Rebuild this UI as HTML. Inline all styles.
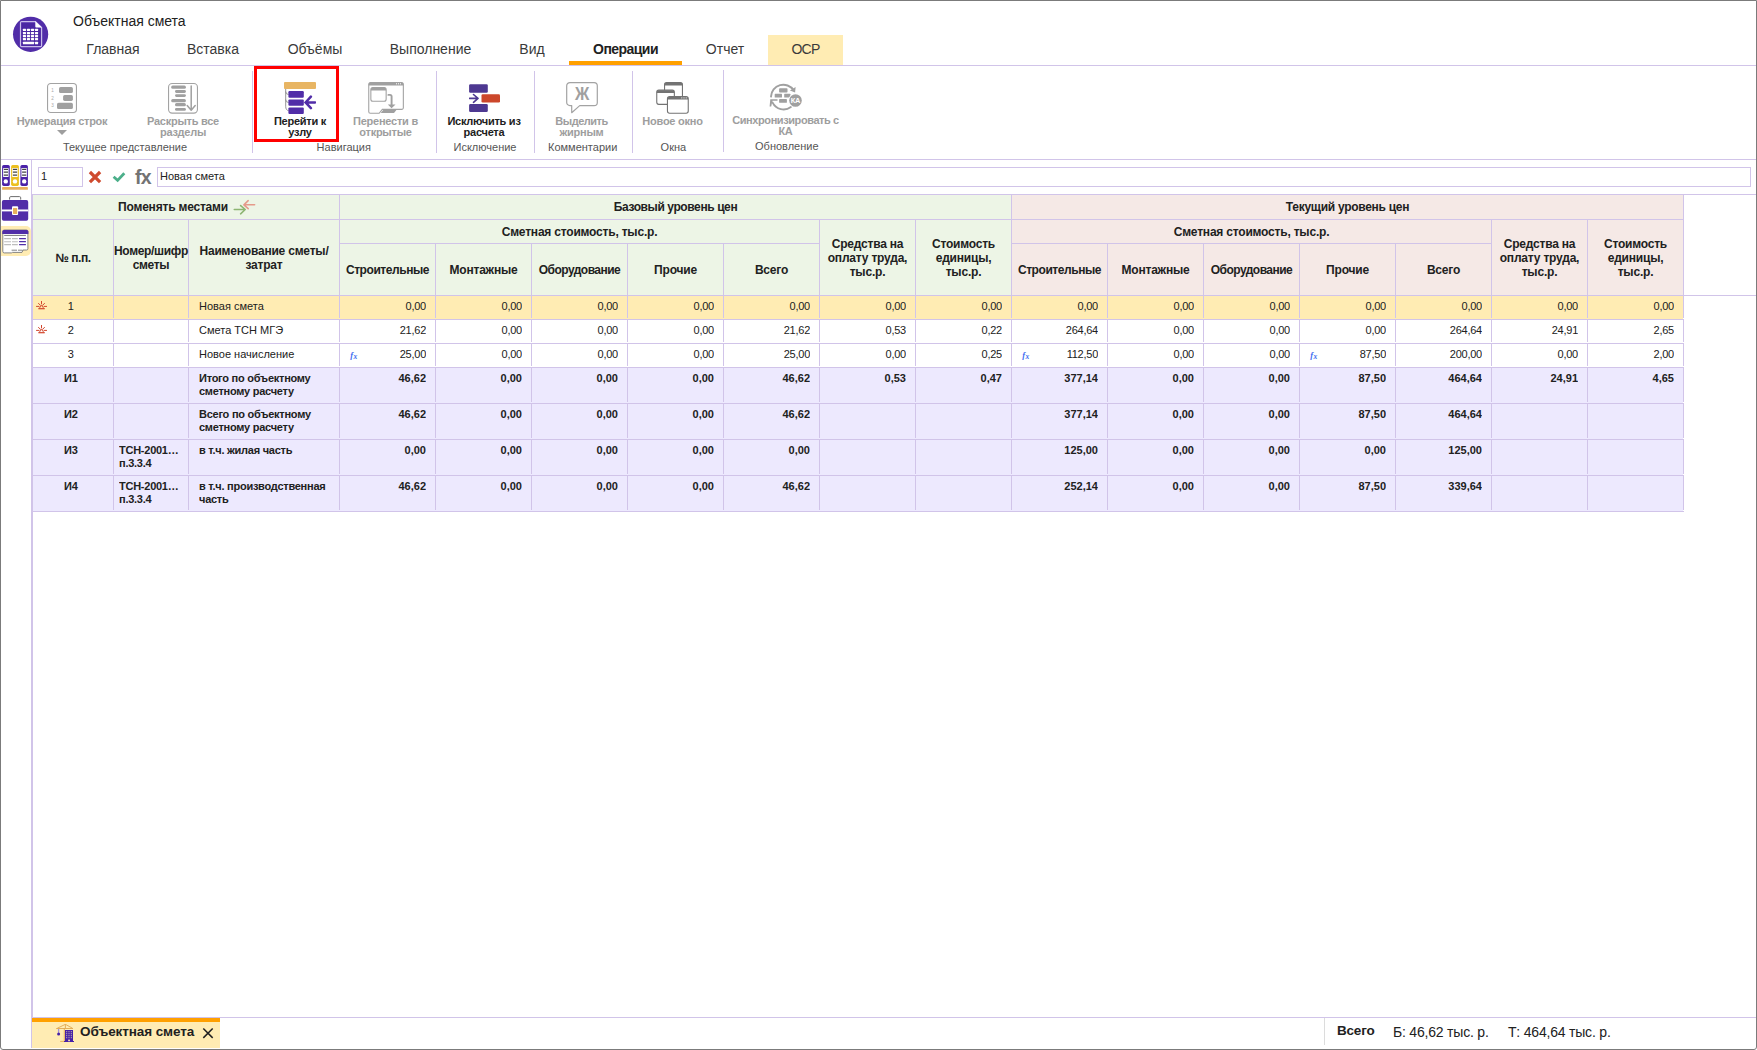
<!DOCTYPE html>
<html lang="ru"><head><meta charset="utf-8"><title>Объектная смета</title>
<style>
*{box-sizing:border-box;margin:0;padding:0}
html,body{width:1757px;height:1050px;overflow:hidden;background:#fff}
body{position:relative;font-family:"Liberation Sans",sans-serif;color:#212121;font-size:11px}
.a{position:absolute}
.t{position:absolute;white-space:nowrap;line-height:1}
.hl{position:absolute;height:1px;background:#d1c4e9}
.vl{position:absolute;width:1px;background:#d1c4e9}
.tab{position:absolute;top:35px;height:30px;font-size:14px;line-height:29px;text-align:center;color:#3a3a3a;white-space:nowrap}
.btn{position:absolute;text-align:center;font-weight:bold;font-size:11px;line-height:11px;color:#9e9e9e;white-space:nowrap;letter-spacing:-0.25px}
.btn.on{color:#212121}
.grp{position:absolute;text-align:center;font-size:11px;line-height:11px;color:#555;white-space:nowrap}
.c{position:absolute;overflow:hidden;white-space:nowrap;font-size:11px;line-height:13px}
.h{position:absolute;font-weight:bold;font-size:12px;line-height:14px;text-align:center;white-space:nowrap;letter-spacing:-0.2px;display:flex;align-items:center;justify-content:center}
.num{text-align:right}
.b{font-weight:bold;letter-spacing:-0.25px}
</style></head>
<body>
<div class="a" style="left:0;top:0;width:1757px;height:1050px;border:1px solid #7b7b7b;border-radius:0 0 3px 3px;z-index:50;pointer-events:none"></div>
<svg class="a" style="left:12px;top:16px" width="38" height="38" viewBox="0 0 38 38">
<circle cx="18.6" cy="18.3" r="17.6" fill="#512da8"/>
<path d="M9.6 7.2h13.2v4.8h4.9v17.8h-18.1z" fill="#4a27a3"/>
<path d="M9.6 5.6h13.8l6.2 5.9v18.1a1.1 1.1 0 0 1-1.1 1.1h-18.9a1.1 1.1 0 0 1-1.1-1.1v-22.9a1.1 1.1 0 0 1 1.1-1.1z" fill="none" stroke="#c9bdea" stroke-width="1.2"/>
<path d="M23.3 5.2l6.6 6.3h-5.6a1 1 0 0 1-1-1z" fill="#fff"/>
<g fill="#fff"><rect x="10.90" y="12.80" width="3.1" height="2.3" rx="0.5"/><rect x="14.93" y="12.80" width="3.1" height="2.3" rx="0.5"/><rect x="18.96" y="12.80" width="3.1" height="2.3" rx="0.5"/><rect x="22.99" y="12.80" width="3.1" height="2.3" rx="0.5"/><rect x="10.90" y="15.90" width="3.1" height="2.3" rx="0.5"/><rect x="14.93" y="15.90" width="3.1" height="2.3" rx="0.5"/><rect x="18.96" y="15.90" width="3.1" height="2.3" rx="0.5"/><rect x="22.99" y="15.90" width="3.1" height="2.3" rx="0.5"/><rect x="10.90" y="19.00" width="3.1" height="2.3" rx="0.5"/><rect x="14.93" y="19.00" width="3.1" height="2.3" rx="0.5"/><rect x="18.96" y="19.00" width="3.1" height="2.3" rx="0.5"/><rect x="22.99" y="19.00" width="3.1" height="2.3" rx="0.5"/><rect x="10.90" y="22.00" width="3.1" height="2.3" rx="0.5"/><rect x="14.93" y="22.00" width="3.1" height="2.3" rx="0.5"/><rect x="18.96" y="22.00" width="3.1" height="2.3" rx="0.5"/><rect x="22.99" y="22.00" width="3.1" height="2.3" rx="0.5"/><rect x="10.9" y="25.85" width="11.2" height="2.3" rx="0.5"/><rect x="22.99" y="25.85" width="3.1" height="2.3" rx="0.5"/></g></svg>
<div class="t" style="left:73px;top:13px;font-size:14px;line-height:16px">Объектная смета</div>
<div class="tab" style="left:63px;width:100px;">Главная</div>
<div class="tab" style="left:163px;width:100px;">Вставка</div>
<div class="tab" style="left:264px;width:102px;">Объёмы</div>
<div class="tab" style="left:366px;width:129px;">Выполнение</div>
<div class="tab" style="left:496px;width:72px;">Вид</div>
<div class="tab" style="left:569px;width:113px;font-weight:bold;color:#212121;letter-spacing:-0.55px;">Операции</div>
<div class="tab" style="left:682px;width:86px;">Отчет</div>
<div class="tab" style="left:768px;width:75px;background:#ffecb3;letter-spacing:-0.8px;">ОСР</div>
<div class="a" style="left:569px;top:61px;width:113px;height:4px;background:#ffa000"></div>
<div class="hl" style="left:1px;top:65px;width:1755px"></div>
<div class="hl" style="left:1px;top:159px;width:1755px"></div>
<div class="vl" style="left:252px;top:71px;height:82px"></div>
<div class="vl" style="left:436px;top:71px;height:82px"></div>
<div class="vl" style="left:534px;top:71px;height:82px"></div>
<div class="vl" style="left:632px;top:71px;height:82px"></div>
<div class="vl" style="left:723px;top:70px;height:82px"></div>
<div class="btn" style="left:-8px;width:140px;top:116px">Нумерация строк</div>
<div class="btn" style="left:113px;width:140px;top:116px">Раскрыть все<br>разделы</div>
<div class="btn on" style="left:230px;width:140px;top:116px">Перейти к<br>узлу</div>
<div class="btn" style="left:315.5px;width:140px;top:116px">Перенести в<br>открытые</div>
<div class="btn on" style="left:414px;width:140px;top:116px">Исключить из<br>расчета</div>
<div class="btn" style="left:511.5px;width:140px;top:116px"><span style="letter-spacing:-0.5px">Выделить</span><br>жирным</div>
<div class="btn" style="left:602.5px;width:140px;top:116px">Новое окно</div>
<div class="btn" style="left:715.5px;width:140px;top:115px"><span style="letter-spacing:-0.42px">Синхронизировать с</span><br>КА</div>
<div class="grp" style="left:45px;width:160px;top:142px">Текущее представление</div>
<div class="grp" style="left:263.75px;width:160px;top:142px">Навигация</div>
<div class="grp" style="left:405px;width:160px;top:142px">Исключение</div>
<div class="grp" style="left:502.70000000000005px;width:160px;top:142px">Комментарии</div>
<div class="grp" style="left:593.4px;width:160px;top:142px">Окна</div>
<div class="grp" style="left:706.8px;width:160px;top:141px">Обновление</div>
<svg class="a" style="left:56px;top:129px" width="12" height="7"><path d="M1 1h10l-5 5z" fill="#9e9e9e"/></svg>
<div class="a" style="left:254px;top:66px;width:85px;height:76px;border:3px solid #ff0000"></div>
<svg class="a" style="left:47px;top:83px" width="30" height="31" viewBox="0 0 30 31"><rect x="0.55" y="0.55" width="28.9" height="28.9" rx="3.2" fill="#fff" stroke="#a3a3a3" stroke-width="1.1"/><g fill="#a0a0a0"><rect x="12" y="4" width="13.9" height="6" rx="1.6"/><rect x="16.1" y="12" width="9.8" height="5.9" rx="1.6"/><rect x="10" y="19.8" width="15.9" height="6.2" rx="1.6"/></g><g font-family="Liberation Sans, sans-serif" font-size="4.6" fill="#a8a8a8"><text x="4.2" y="8.7">1</text><text x="4.2" y="16.6">2</text><text x="4.2" y="24.4">3</text></g></svg>
<svg class="a" style="left:168px;top:83px" width="30" height="31" viewBox="0 0 30 31"><rect x="0.55" y="0.55" width="28.9" height="29.6" rx="3.6" fill="#fff" stroke="#a3a3a3" stroke-width="1.1"/><g fill="#a0a0a0"><rect x="3.2" y="2.6" width="14.7" height="3.1" rx="1.5"/><rect x="7" y="7" width="10.9" height="2.9" rx="1.4"/><rect x="7" y="11.2" width="10.9" height="2.8" rx="1.4"/><rect x="3.2" y="16" width="14.7" height="3.2" rx="1.5"/><rect x="7" y="20.1" width="10.9" height="3.1" rx="1.5"/><rect x="7" y="24.9" width="10.9" height="2.9" rx="1.4"/></g><path d="M23.2 2.9V27M19.2 22.5l4 4.7l4-4.7" fill="none" stroke="#a0a0a0" stroke-width="1.5" stroke-linecap="round" stroke-linejoin="round"/></svg>
<svg class="a" style="left:284px;top:82px" width="32" height="33" viewBox="0 0 32 33"><rect x="0" y="0" width="32" height="7" rx="0.9" fill="#e8b563"/><path d="M1.7 7v17.2q0 4.3 2.9 4.3M1.7 9.5q0 3 2.9 3M1.7 17.5q0 3 2.9 3" fill="none" stroke="#8a8a8a" stroke-width="0.9"/><g fill="#512da8"><rect x="4.4" y="9.1" width="15.4" height="6.7" rx="1.1"/><rect x="4.4" y="17.5" width="15.4" height="6.3" rx="1.1"/><rect x="4.4" y="25.5" width="15.4" height="6.5" rx="1.1"/></g><path d="M31 20.4H23M26.9 14.6L21.6 20.4L26.9 26.2" fill="none" stroke="#512da8" stroke-width="2.5" stroke-linecap="round" stroke-linejoin="miter"/></svg>
<svg class="a" style="left:368px;top:82px" width="36" height="32" viewBox="0 0 36 32"><path d="M0.75 2.2a1.6 1.6 0 0 1 1.6-1.6h31.4a1.6 1.6 0 0 1 1.6 1.6v23.6a1.6 1.6 0 0 1-1.6 1.6h-19.4l-3.2 3.9h-8.8a1.6 1.6 0 0 1-1.6-1.6z" fill="#fff" stroke="#a3a3a3" stroke-width="1.1"/><path d="M0.75 3.6v-1.4a1.6 1.6 0 0 1 1.6-1.6h31.4a1.6 1.6 0 0 1 1.6 1.6v1.4z" fill="#a0a0a0"/><g fill="#fff"><rect x="28" y="1.3" width="1" height="1"/><rect x="30" y="1.3" width="1" height="1"/><rect x="32" y="1.3" width="1" height="1"/></g><path d="M15.6 27.6h13.2l-2.8 3.5h-13.3z" fill="#a0a0a0"/><rect x="2.85" y="5.65" width="15.3" height="13.6" rx="2" fill="#fff" stroke="#a3a3a3" stroke-width="1.1"/><path d="M2.85 8.6v-1a2 2 0 0 1 2-2h11.3a2 2 0 0 1 2 2v1z" fill="#a0a0a0"/><path d="M20.4 12.9h1.6a1.6 1.6 0 0 1 1.6 1.6v8.3" fill="none" stroke="#a0a0a0" stroke-width="1.9" stroke-linecap="round"/><path d="M19.8 22.4h7.7l-3.9 3.8z" fill="#a0a0a0"/></svg>
<svg class="a" style="left:469px;top:84px" width="32" height="29" viewBox="0 0 32 29"><g fill="#4d3891"><rect x="0.1" y="0.3" width="18.7" height="8.4" rx="1.3"/><rect x="0.1" y="20.1" width="18.7" height="8" rx="1.3"/></g><rect x="12.5" y="10.2" width="18.5" height="8.4" rx="1.3" fill="#cc472b"/><path d="M0.6 14.4H8.4M4.5 10.5L9 14.4L4.5 18.3" fill="none" stroke="#4d3891" stroke-width="1.6" stroke-linecap="round" stroke-linejoin="round"/></svg>
<svg class="a" style="left:566px;top:82px" width="33" height="32" viewBox="0 0 33 32"><path d="M0.7 3.8a3.2 3.2 0 0 1 3.2-3.2h24.2a3.2 3.2 0 0 1 3.2 3.2v16.6a3.2 3.2 0 0 1-3.2 3.2h-14.4l-8 7.1v-7.1h-1.8a3.2 3.2 0 0 1-3.2-3.2z" fill="#fff" stroke="#a3a3a3" stroke-width="1.2" stroke-linejoin="round"/><text transform="translate(16.1 18.1) scale(0.86 1)" text-anchor="middle" font-family="Liberation Sans, sans-serif" font-weight="bold" font-size="18.4" fill="#a0a0a0">Ж</text></svg>
<svg class="a" style="left:656px;top:82px" width="34" height="33" viewBox="0 0 34 33"><g fill="#fff" stroke="#737373" stroke-width="1.1"><rect x="8.55" y="0.55" width="17.9" height="17" rx="2"/></g><path d="M8.55 3.4v-0.85a2 2 0 0 1 2-2h13.9a2 2 0 0 1 2 2v0.85z" fill="#737373"/><rect x="0.75" y="8.15" width="17.6" height="14.2" rx="2" fill="#fff" stroke="#737373" stroke-width="1.1"/><path d="M0.75 11v-0.85a2 2 0 0 1 2-2h13.6a2 2 0 0 1 2 2v0.85z" fill="#737373"/><rect x="11.45" y="14.65" width="20.8" height="16.6" rx="2.2" fill="#fff" stroke="#737373" stroke-width="1.1"/><path d="M11.45 17.4v-0.55a2.2 2.2 0 0 1 2.2-2.2h16.4a2.2 2.2 0 0 1 2.2 2.2v0.55z" fill="#737373"/><g fill="#fff"><rect x="25.3" y="15.4" width="1" height="1"/><rect x="27.5" y="15.4" width="1" height="1"/><rect x="29.7" y="15.4" width="1" height="1"/></g></svg>
<svg class="a" style="left:769px;top:82px" width="34" height="32" viewBox="0 0 34 32"><g fill="none" stroke="#a0a0a0" stroke-width="1.9" stroke-linecap="round"><path d="M2 14.6A12.3 12.3 0 0 1 24.6 8.3"/><path d="M21.9 25A12.3 12.3 0 0 1 3.6 20.6"/></g><g fill="#a0a0a0"><path d="M26.6 5l-0.5 5.6l-5.2-2.2z"/><path d="M1.3 17.2h7.2v1.6h-5l-1.3 5.8h-1.6z"/><rect x="10.1" y="6.3" width="8.4" height="4.2" rx="0.8"/><rect x="5.7" y="11.8" width="7.3" height="3.8" rx="0.6"/><rect x="15.2" y="11.8" width="6.3" height="3.8" rx="0.6"/><rect x="10.1" y="17.1" width="7.8" height="3.7" rx="0.6"/></g><circle cx="26.5" cy="18.5" r="7.2" fill="#fff"/><circle cx="26.5" cy="18.5" r="6.3" fill="#a0a0a0"/><text x="26.4" y="21.2" text-anchor="middle" font-family="Liberation Sans, sans-serif" font-weight="bold" font-size="7.4" fill="#fff" letter-spacing="-0.3">КА</text></svg>
<svg class="a" style="left:232px;top:199px;z-index:5" width="26" height="18" viewBox="0 0 26 18"><path d="M2.3 10.5H12.8M8.6 6.6L13.2 10.5L8.6 14.8" fill="none" stroke="#8db572" stroke-width="1.6" stroke-linecap="round" stroke-linejoin="round"/><path d="M22.6 5.8H12.4M16.2 1.7L11.9 5.8L16.2 9.7" fill="none" stroke="#e59a8a" stroke-width="1.6" stroke-linecap="round" stroke-linejoin="round"/></svg>

<div class="vl" style="left:31px;top:160px;height:888px"></div>
<svg class="a" style="left:2px;top:165px" width="27" height="26" viewBox="0 0 27 26"><g><rect x="0.1" y="0" width="7.7" height="20.9" rx="1.6" fill="#4a22a8"/><rect x="9.1" y="0" width="7.8" height="20.9" rx="1.6" fill="#ecc01e"/><rect x="18.4" y="0" width="7.5" height="20.9" rx="1.6" fill="#4a22a8"/></g><g fill="#fff"><rect x="1.1" y="3" width="5.5" height="9" rx="0.6"/><rect x="10.2" y="3" width="5.5" height="9" rx="0.6"/><rect x="19.4" y="3" width="5.5" height="9" rx="0.6"/><circle cx="3.8" cy="16.4" r="2.2"/><circle cx="13" cy="16.4" r="2.2"/><circle cx="22.2" cy="16.4" r="2.2"/></g><g stroke="#444" stroke-width="1.2"><path d="M1.8 4.3h4.2M1.8 7.2h4.2M1.8 10.1h4.2M10.9 4.3h4.2M10.9 7.2h4.2M10.9 10.1h4.2M20.1 4.3h4.2M20.1 7.2h4.2M20.1 10.1h4.2"/></g><rect x="0.1" y="22.1" width="25.8" height="2.7" rx="0.4" fill="#e8b05c"/></svg>
<svg class="a" style="left:1px;top:195px" width="29" height="27" viewBox="0 0 29 27"><path d="M8.6 4.6v-1.8a1.2 1.2 0 0 1 1.2-1.2h8.7a1.2 1.2 0 0 1 1.2 1.2v1.8" fill="none" stroke="#6d6d6d" stroke-width="1"/><rect x="0.9" y="5.1" width="26.3" height="20.7" rx="1.8" fill="#512da8"/><rect x="0.9" y="14.5" width="26.3" height="1.9" fill="#fff"/><rect x="11" y="11.2" width="6.1" height="8.8" rx="1" fill="#fff"/><rect x="12" y="12.9" width="4.2" height="6.1" rx="0.4" fill="#e8b05c"/></svg>
<div class="a" style="left:1px;top:226px;width:30px;height:30px;background:#ffecb3;border-radius:0 5px 5px 0"></div>
<svg class="a" style="left:1px;top:229px" width="29" height="25" viewBox="0 0 29 25"><path d="M1.8 2.5a1.5 1.5 0 0 1 1.5-1.5h22.1a1.5 1.5 0 0 1 1.5 1.5v17.2a1.3 1.3 0 0 1-1.3 1.3h-3.6l-1 2.4h-9.6l-1 0.5h-7.1a1.5 1.5 0 0 1-1.5-1.5z" fill="#fff" stroke="#777" stroke-width="0.9"/><path d="M1.3 4.9v-2.4a1.6 1.6 0 0 1 1.6-1.6h22.9a1.6 1.6 0 0 1 1.6 1.6v2.4z" fill="#512da8"/><path d="M3.2 6.4h21.7" stroke="#777" stroke-width="1"/><g stroke="#bdbdbd" stroke-width="1.1"><path d="M3.2 9.6h6.8M11 9.6h5.8M3.2 12.7h6.8M11 12.7h5.8M3.2 15.6h6.8M11 15.6h5.8"/></g><g stroke="#512da8" stroke-width="1.2"><path d="M18.1 9.6h6.8M18.1 12.7h6.8M18.1 15.6h6.8"/></g><path d="M10.6 21.2h5.4M17 21.2h4.6" stroke="#777" stroke-width="0.9"/></svg>

<div class="a" style="left:38px;top:167px;width:45px;height:20px;border:1px solid #d1c4e9"></div>
<div class="t" style="left:41px;top:171px;font-size:11px;line-height:11px">1</div>
<div class="a" style="left:157px;top:167px;width:1594px;height:20px;border:1px solid #d1c4e9"></div>
<div class="t" style="left:160px;top:171px;font-size:11px;line-height:11px">Новая смета</div>
<svg class="a" style="left:88px;top:170px" width="14" height="14"><path d="M1.9 2l10.2 10.2M12.1 2l-10.2 10.2" stroke="#cf4a2e" stroke-width="3.2" fill="none"/></svg>
<svg class="a" style="left:112px;top:170px" width="14" height="14"><path d="M1.6 6.8l4 3.6l6.7-7.2" stroke="#4caf8a" stroke-width="2.8" fill="none"/></svg>
<div class="t" style="left:135px;top:167px;font-size:19.5px;line-height:21px;font-weight:bold;color:#737373;letter-spacing:-0.8px">fx</div>
<div class="a" style="left:33px;top:195px;width:978px;height:100px;background:#edf5e6"></div>
<div class="a" style="left:1012px;top:195px;width:671px;height:100px;background:#f5e9e6"></div>
<div class="hl" style="left:32px;top:194px;width:1724px"></div>
<div class="hl" style="left:32px;top:219px;width:1652px"></div>
<div class="hl" style="left:339px;top:243px;width:480px"></div>
<div class="hl" style="left:1011px;top:243px;width:480px"></div>
<div class="hl" style="left:32px;top:295px;width:1724px"></div>
<div class="vl" style="left:32px;top:194px;height:824px"></div>
<div class="vl" style="left:339px;top:194px;height:102px"></div>
<div class="vl" style="left:1011px;top:194px;height:102px"></div>
<div class="vl" style="left:1683px;top:194px;height:102px"></div>
<div class="vl" style="left:113px;top:220px;height:75px"></div>
<div class="vl" style="left:188px;top:220px;height:75px"></div>
<div class="vl" style="left:819px;top:220px;height:75px"></div>
<div class="vl" style="left:915px;top:220px;height:75px"></div>
<div class="vl" style="left:1491px;top:220px;height:75px"></div>
<div class="vl" style="left:1587px;top:220px;height:75px"></div>
<div class="vl" style="left:435px;top:244px;height:51px"></div>
<div class="vl" style="left:531px;top:244px;height:51px"></div>
<div class="vl" style="left:627px;top:244px;height:51px"></div>
<div class="vl" style="left:723px;top:244px;height:51px"></div>
<div class="vl" style="left:1107px;top:244px;height:51px"></div>
<div class="vl" style="left:1203px;top:244px;height:51px"></div>
<div class="vl" style="left:1299px;top:244px;height:51px"></div>
<div class="vl" style="left:1395px;top:244px;height:51px"></div>
<div class="h" style="left:33px;width:306px;top:195px;height:24px;">Поменять местами<span style="display:inline-block;width:26px"></span></div>
<div class="h" style="left:340px;width:671px;top:195px;height:24px;letter-spacing:-0.4px;">Базовый уровень цен</div>
<div class="h" style="left:1012px;width:671px;top:195px;height:24px;letter-spacing:-0.28px;">Текущий уровень цен</div>
<div class="h" style="left:33px;width:80px;top:220px;height:75px;letter-spacing:-0.45px;">№ п.п.</div>
<div class="h" style="left:114px;width:74px;top:220px;height:75px;letter-spacing:-0.33px;"><div>Номер/шифр<br>сметы</div></div>
<div class="h" style="left:189px;width:150px;top:220px;height:75px;"><div>Наименование сметы/<br>затрат</div></div>
<div class="h" style="left:340px;width:479px;top:220px;height:23px;">Сметная стоимость, тыс.р.</div>
<div class="h" style="left:340px;width:95px;top:244px;height:51px;letter-spacing:-0.43px;">Строительные</div>
<div class="h" style="left:436px;width:95px;top:244px;height:51px;">Монтажные</div>
<div class="h" style="left:532px;width:95px;top:244px;height:51px;letter-spacing:-0.52px;">Оборудование</div>
<div class="h" style="left:628px;width:95px;top:244px;height:51px;">Прочие</div>
<div class="h" style="left:724px;width:95px;top:244px;height:51px;">Всего</div>
<div class="h" style="left:820px;width:95px;top:220px;height:75px;"><div>Средства на<br>оплату труда,<br>тыс.р.</div></div>
<div class="h" style="left:916px;width:95px;top:220px;height:75px;"><div>Стоимость<br>единицы,<br>тыс.р.</div></div>
<div class="h" style="left:1012px;width:479px;top:220px;height:23px;">Сметная стоимость, тыс.р.</div>
<div class="h" style="left:1012px;width:95px;top:244px;height:51px;letter-spacing:-0.43px;">Строительные</div>
<div class="h" style="left:1108px;width:95px;top:244px;height:51px;">Монтажные</div>
<div class="h" style="left:1204px;width:95px;top:244px;height:51px;letter-spacing:-0.52px;">Оборудование</div>
<div class="h" style="left:1300px;width:95px;top:244px;height:51px;">Прочие</div>
<div class="h" style="left:1396px;width:95px;top:244px;height:51px;">Всего</div>
<div class="h" style="left:1492px;width:95px;top:220px;height:75px;"><div>Средства на<br>оплату труда,<br>тыс.р.</div></div>
<div class="h" style="left:1588px;width:95px;top:220px;height:75px;"><div>Стоимость<br>единицы,<br>тыс.р.</div></div>
<div class="a" style="left:33px;top:296px;width:1650px;height:23px;background:#ffecb3"></div>
<div class="hl" style="left:32px;top:319px;width:1652px"></div>
<div class="vl" style="left:113px;top:296px;height:22px"></div>
<div class="vl" style="left:188px;top:296px;height:22px"></div>
<div class="vl" style="left:339px;top:296px;height:22px"></div>
<div class="vl" style="left:435px;top:296px;height:22px"></div>
<div class="vl" style="left:531px;top:296px;height:22px"></div>
<div class="vl" style="left:627px;top:296px;height:22px"></div>
<div class="vl" style="left:723px;top:296px;height:22px"></div>
<div class="vl" style="left:819px;top:296px;height:22px"></div>
<div class="vl" style="left:915px;top:296px;height:22px"></div>
<div class="vl" style="left:1011px;top:296px;height:22px"></div>
<div class="vl" style="left:1107px;top:296px;height:22px"></div>
<div class="vl" style="left:1203px;top:296px;height:22px"></div>
<div class="vl" style="left:1299px;top:296px;height:22px"></div>
<div class="vl" style="left:1395px;top:296px;height:22px"></div>
<div class="vl" style="left:1491px;top:296px;height:22px"></div>
<div class="vl" style="left:1587px;top:296px;height:22px"></div>
<div class="vl" style="left:1683px;top:296px;height:22px"></div>
<svg class="a" style="left:36px;top:301px" width="12" height="10" viewBox="0 0 12 10"><g stroke="#d2462c" stroke-width="1" fill="none" stroke-linecap="round"><path d="M5.5 0.4V2.9M2.5 2.5L4.5 4.3M8.5 2.5L6.5 4.3M0.5 5.4H3.1M8 5.4H10.6"/><path d="M3.1 7.5L5.5 4.3L7.9 7.5" stroke-width="0.9" stroke-linecap="butt"/><path d="M2.4 7.7H8.7" stroke-width="1.2" stroke-linecap="butt"/></g></svg>
<div class="c" style="left:33px;width:80px;top:300px;text-align:center;padding-right:4.5px">1</div>
<div class="c" style="left:199px;width:140px;top:300px">Новая смета</div>
<div class="c num" style="left:340px;width:86px;top:300px;letter-spacing:-0.25px">0,00</div>
<div class="c num" style="left:436px;width:86px;top:300px;letter-spacing:-0.25px">0,00</div>
<div class="c num" style="left:532px;width:86px;top:300px;letter-spacing:-0.25px">0,00</div>
<div class="c num" style="left:628px;width:86px;top:300px;letter-spacing:-0.25px">0,00</div>
<div class="c num" style="left:724px;width:86px;top:300px;letter-spacing:-0.25px">0,00</div>
<div class="c num" style="left:820px;width:86px;top:300px;letter-spacing:-0.25px">0,00</div>
<div class="c num" style="left:916px;width:86px;top:300px;letter-spacing:-0.25px">0,00</div>
<div class="c num" style="left:1012px;width:86px;top:300px;letter-spacing:-0.25px">0,00</div>
<div class="c num" style="left:1108px;width:86px;top:300px;letter-spacing:-0.25px">0,00</div>
<div class="c num" style="left:1204px;width:86px;top:300px;letter-spacing:-0.25px">0,00</div>
<div class="c num" style="left:1300px;width:86px;top:300px;letter-spacing:-0.25px">0,00</div>
<div class="c num" style="left:1396px;width:86px;top:300px;letter-spacing:-0.25px">0,00</div>
<div class="c num" style="left:1492px;width:86px;top:300px;letter-spacing:-0.25px">0,00</div>
<div class="c num" style="left:1588px;width:86px;top:300px;letter-spacing:-0.25px">0,00</div>
<div class="a" style="left:33px;top:320px;width:1650px;height:23px;background:#fff"></div>
<div class="hl" style="left:32px;top:343px;width:1652px"></div>
<div class="vl" style="left:113px;top:320px;height:22px"></div>
<div class="vl" style="left:188px;top:320px;height:22px"></div>
<div class="vl" style="left:339px;top:320px;height:22px"></div>
<div class="vl" style="left:435px;top:320px;height:22px"></div>
<div class="vl" style="left:531px;top:320px;height:22px"></div>
<div class="vl" style="left:627px;top:320px;height:22px"></div>
<div class="vl" style="left:723px;top:320px;height:22px"></div>
<div class="vl" style="left:819px;top:320px;height:22px"></div>
<div class="vl" style="left:915px;top:320px;height:22px"></div>
<div class="vl" style="left:1011px;top:320px;height:22px"></div>
<div class="vl" style="left:1107px;top:320px;height:22px"></div>
<div class="vl" style="left:1203px;top:320px;height:22px"></div>
<div class="vl" style="left:1299px;top:320px;height:22px"></div>
<div class="vl" style="left:1395px;top:320px;height:22px"></div>
<div class="vl" style="left:1491px;top:320px;height:22px"></div>
<div class="vl" style="left:1587px;top:320px;height:22px"></div>
<div class="vl" style="left:1683px;top:320px;height:22px"></div>
<svg class="a" style="left:36px;top:325px" width="12" height="10" viewBox="0 0 12 10"><g stroke="#d2462c" stroke-width="1" fill="none" stroke-linecap="round"><path d="M5.5 0.4V2.9M2.5 2.5L4.5 4.3M8.5 2.5L6.5 4.3M0.5 5.4H3.1M8 5.4H10.6"/><path d="M3.1 7.5L5.5 4.3L7.9 7.5" stroke-width="0.9" stroke-linecap="butt"/><path d="M2.4 7.7H8.7" stroke-width="1.2" stroke-linecap="butt"/></g></svg>
<div class="c" style="left:33px;width:80px;top:324px;text-align:center;padding-right:4.5px">2</div>
<div class="c" style="left:199px;width:140px;top:324px">Смета ТСН МГЭ</div>
<div class="c num" style="left:340px;width:86px;top:324px;letter-spacing:-0.25px">21,62</div>
<div class="c num" style="left:436px;width:86px;top:324px;letter-spacing:-0.25px">0,00</div>
<div class="c num" style="left:532px;width:86px;top:324px;letter-spacing:-0.25px">0,00</div>
<div class="c num" style="left:628px;width:86px;top:324px;letter-spacing:-0.25px">0,00</div>
<div class="c num" style="left:724px;width:86px;top:324px;letter-spacing:-0.25px">21,62</div>
<div class="c num" style="left:820px;width:86px;top:324px;letter-spacing:-0.25px">0,53</div>
<div class="c num" style="left:916px;width:86px;top:324px;letter-spacing:-0.25px">0,22</div>
<div class="c num" style="left:1012px;width:86px;top:324px;letter-spacing:-0.25px">264,64</div>
<div class="c num" style="left:1108px;width:86px;top:324px;letter-spacing:-0.25px">0,00</div>
<div class="c num" style="left:1204px;width:86px;top:324px;letter-spacing:-0.25px">0,00</div>
<div class="c num" style="left:1300px;width:86px;top:324px;letter-spacing:-0.25px">0,00</div>
<div class="c num" style="left:1396px;width:86px;top:324px;letter-spacing:-0.25px">264,64</div>
<div class="c num" style="left:1492px;width:86px;top:324px;letter-spacing:-0.25px">24,91</div>
<div class="c num" style="left:1588px;width:86px;top:324px;letter-spacing:-0.25px">2,65</div>
<div class="a" style="left:33px;top:344px;width:1650px;height:23px;background:#fff"></div>
<div class="hl" style="left:32px;top:367px;width:1652px"></div>
<div class="vl" style="left:113px;top:344px;height:22px"></div>
<div class="vl" style="left:188px;top:344px;height:22px"></div>
<div class="vl" style="left:339px;top:344px;height:22px"></div>
<div class="vl" style="left:435px;top:344px;height:22px"></div>
<div class="vl" style="left:531px;top:344px;height:22px"></div>
<div class="vl" style="left:627px;top:344px;height:22px"></div>
<div class="vl" style="left:723px;top:344px;height:22px"></div>
<div class="vl" style="left:819px;top:344px;height:22px"></div>
<div class="vl" style="left:915px;top:344px;height:22px"></div>
<div class="vl" style="left:1011px;top:344px;height:22px"></div>
<div class="vl" style="left:1107px;top:344px;height:22px"></div>
<div class="vl" style="left:1203px;top:344px;height:22px"></div>
<div class="vl" style="left:1299px;top:344px;height:22px"></div>
<div class="vl" style="left:1395px;top:344px;height:22px"></div>
<div class="vl" style="left:1491px;top:344px;height:22px"></div>
<div class="vl" style="left:1587px;top:344px;height:22px"></div>
<div class="vl" style="left:1683px;top:344px;height:22px"></div>
<div class="c" style="left:33px;width:80px;top:348px;text-align:center;padding-right:4.5px">3</div>
<div class="c" style="left:199px;width:140px;top:348px">Новое начисление</div>
<div class="c num" style="left:340px;width:86px;top:348px;letter-spacing:-0.25px">25,00</div>
<div class="t" style="left:350.3px;top:349.5px;font-size:8.5px;line-height:10px;font-style:italic;font-weight:bold;color:#3d6bf0;font-family:'Liberation Serif',serif;letter-spacing:0.2px"><span>f</span><span style="font-size:7.5px;position:relative;top:1px;left:0.2px">x</span></div>
<div class="c num" style="left:436px;width:86px;top:348px;letter-spacing:-0.25px">0,00</div>
<div class="c num" style="left:532px;width:86px;top:348px;letter-spacing:-0.25px">0,00</div>
<div class="c num" style="left:628px;width:86px;top:348px;letter-spacing:-0.25px">0,00</div>
<div class="c num" style="left:724px;width:86px;top:348px;letter-spacing:-0.25px">25,00</div>
<div class="c num" style="left:820px;width:86px;top:348px;letter-spacing:-0.25px">0,00</div>
<div class="c num" style="left:916px;width:86px;top:348px;letter-spacing:-0.25px">0,25</div>
<div class="c num" style="left:1012px;width:86px;top:348px;letter-spacing:-0.25px">112,50</div>
<div class="t" style="left:1022.3px;top:349.5px;font-size:8.5px;line-height:10px;font-style:italic;font-weight:bold;color:#3d6bf0;font-family:'Liberation Serif',serif;letter-spacing:0.2px"><span>f</span><span style="font-size:7.5px;position:relative;top:1px;left:0.2px">x</span></div>
<div class="c num" style="left:1108px;width:86px;top:348px;letter-spacing:-0.25px">0,00</div>
<div class="c num" style="left:1204px;width:86px;top:348px;letter-spacing:-0.25px">0,00</div>
<div class="c num" style="left:1300px;width:86px;top:348px;letter-spacing:-0.25px">87,50</div>
<div class="t" style="left:1310.3px;top:349.5px;font-size:8.5px;line-height:10px;font-style:italic;font-weight:bold;color:#3d6bf0;font-family:'Liberation Serif',serif;letter-spacing:0.2px"><span>f</span><span style="font-size:7.5px;position:relative;top:1px;left:0.2px">x</span></div>
<div class="c num" style="left:1396px;width:86px;top:348px;letter-spacing:-0.25px">200,00</div>
<div class="c num" style="left:1492px;width:86px;top:348px;letter-spacing:-0.25px">0,00</div>
<div class="c num" style="left:1588px;width:86px;top:348px;letter-spacing:-0.25px">2,00</div>
<div class="a" style="left:33px;top:368px;width:1650px;height:35px;background:#ede9fe"></div>
<div class="hl" style="left:32px;top:403px;width:1652px"></div>
<div class="vl" style="left:113px;top:368px;height:34px"></div>
<div class="vl" style="left:188px;top:368px;height:34px"></div>
<div class="vl" style="left:339px;top:368px;height:34px"></div>
<div class="vl" style="left:435px;top:368px;height:34px"></div>
<div class="vl" style="left:531px;top:368px;height:34px"></div>
<div class="vl" style="left:627px;top:368px;height:34px"></div>
<div class="vl" style="left:723px;top:368px;height:34px"></div>
<div class="vl" style="left:819px;top:368px;height:34px"></div>
<div class="vl" style="left:915px;top:368px;height:34px"></div>
<div class="vl" style="left:1011px;top:368px;height:34px"></div>
<div class="vl" style="left:1107px;top:368px;height:34px"></div>
<div class="vl" style="left:1203px;top:368px;height:34px"></div>
<div class="vl" style="left:1299px;top:368px;height:34px"></div>
<div class="vl" style="left:1395px;top:368px;height:34px"></div>
<div class="vl" style="left:1491px;top:368px;height:34px"></div>
<div class="vl" style="left:1587px;top:368px;height:34px"></div>
<div class="vl" style="left:1683px;top:368px;height:34px"></div>
<div class="c b" style="left:33px;width:80px;top:372px;text-align:center;padding-right:4.5px">И1</div>
<div class="c b" style="left:199px;width:140px;top:372px">Итого по объектному<br>сметному расчету</div>
<div class="c num b" style="left:340px;width:86px;top:372px;letter-spacing:0">46,62</div>
<div class="c num b" style="left:436px;width:86px;top:372px;letter-spacing:0">0,00</div>
<div class="c num b" style="left:532px;width:86px;top:372px;letter-spacing:0">0,00</div>
<div class="c num b" style="left:628px;width:86px;top:372px;letter-spacing:0">0,00</div>
<div class="c num b" style="left:724px;width:86px;top:372px;letter-spacing:0">46,62</div>
<div class="c num b" style="left:820px;width:86px;top:372px;letter-spacing:0">0,53</div>
<div class="c num b" style="left:916px;width:86px;top:372px;letter-spacing:0">0,47</div>
<div class="c num b" style="left:1012px;width:86px;top:372px;letter-spacing:0">377,14</div>
<div class="c num b" style="left:1108px;width:86px;top:372px;letter-spacing:0">0,00</div>
<div class="c num b" style="left:1204px;width:86px;top:372px;letter-spacing:0">0,00</div>
<div class="c num b" style="left:1300px;width:86px;top:372px;letter-spacing:0">87,50</div>
<div class="c num b" style="left:1396px;width:86px;top:372px;letter-spacing:0">464,64</div>
<div class="c num b" style="left:1492px;width:86px;top:372px;letter-spacing:0">24,91</div>
<div class="c num b" style="left:1588px;width:86px;top:372px;letter-spacing:0">4,65</div>
<div class="a" style="left:33px;top:404px;width:1650px;height:35px;background:#ede9fe"></div>
<div class="hl" style="left:32px;top:439px;width:1652px"></div>
<div class="vl" style="left:113px;top:404px;height:34px"></div>
<div class="vl" style="left:188px;top:404px;height:34px"></div>
<div class="vl" style="left:339px;top:404px;height:34px"></div>
<div class="vl" style="left:435px;top:404px;height:34px"></div>
<div class="vl" style="left:531px;top:404px;height:34px"></div>
<div class="vl" style="left:627px;top:404px;height:34px"></div>
<div class="vl" style="left:723px;top:404px;height:34px"></div>
<div class="vl" style="left:819px;top:404px;height:34px"></div>
<div class="vl" style="left:915px;top:404px;height:34px"></div>
<div class="vl" style="left:1011px;top:404px;height:34px"></div>
<div class="vl" style="left:1107px;top:404px;height:34px"></div>
<div class="vl" style="left:1203px;top:404px;height:34px"></div>
<div class="vl" style="left:1299px;top:404px;height:34px"></div>
<div class="vl" style="left:1395px;top:404px;height:34px"></div>
<div class="vl" style="left:1491px;top:404px;height:34px"></div>
<div class="vl" style="left:1587px;top:404px;height:34px"></div>
<div class="vl" style="left:1683px;top:404px;height:34px"></div>
<div class="c b" style="left:33px;width:80px;top:408px;text-align:center;padding-right:4.5px">И2</div>
<div class="c b" style="left:199px;width:140px;top:408px">Всего по объектному<br>сметному расчету</div>
<div class="c num b" style="left:340px;width:86px;top:408px;letter-spacing:0">46,62</div>
<div class="c num b" style="left:436px;width:86px;top:408px;letter-spacing:0">0,00</div>
<div class="c num b" style="left:532px;width:86px;top:408px;letter-spacing:0">0,00</div>
<div class="c num b" style="left:628px;width:86px;top:408px;letter-spacing:0">0,00</div>
<div class="c num b" style="left:724px;width:86px;top:408px;letter-spacing:0">46,62</div>
<div class="c num b" style="left:1012px;width:86px;top:408px;letter-spacing:0">377,14</div>
<div class="c num b" style="left:1108px;width:86px;top:408px;letter-spacing:0">0,00</div>
<div class="c num b" style="left:1204px;width:86px;top:408px;letter-spacing:0">0,00</div>
<div class="c num b" style="left:1300px;width:86px;top:408px;letter-spacing:0">87,50</div>
<div class="c num b" style="left:1396px;width:86px;top:408px;letter-spacing:0">464,64</div>
<div class="a" style="left:33px;top:440px;width:1650px;height:35px;background:#ede9fe"></div>
<div class="hl" style="left:32px;top:475px;width:1652px"></div>
<div class="vl" style="left:113px;top:440px;height:34px"></div>
<div class="vl" style="left:188px;top:440px;height:34px"></div>
<div class="vl" style="left:339px;top:440px;height:34px"></div>
<div class="vl" style="left:435px;top:440px;height:34px"></div>
<div class="vl" style="left:531px;top:440px;height:34px"></div>
<div class="vl" style="left:627px;top:440px;height:34px"></div>
<div class="vl" style="left:723px;top:440px;height:34px"></div>
<div class="vl" style="left:819px;top:440px;height:34px"></div>
<div class="vl" style="left:915px;top:440px;height:34px"></div>
<div class="vl" style="left:1011px;top:440px;height:34px"></div>
<div class="vl" style="left:1107px;top:440px;height:34px"></div>
<div class="vl" style="left:1203px;top:440px;height:34px"></div>
<div class="vl" style="left:1299px;top:440px;height:34px"></div>
<div class="vl" style="left:1395px;top:440px;height:34px"></div>
<div class="vl" style="left:1491px;top:440px;height:34px"></div>
<div class="vl" style="left:1587px;top:440px;height:34px"></div>
<div class="vl" style="left:1683px;top:440px;height:34px"></div>
<div class="c b" style="left:33px;width:80px;top:444px;text-align:center;padding-right:4.5px">И3</div>
<div class="c b" style="left:119px;width:69px;top:444px">ТСН-2001…<br>п.3.3.4</div>
<div class="c b" style="left:199px;width:140px;top:444px">в т.ч. жилая часть</div>
<div class="c num b" style="left:340px;width:86px;top:444px;letter-spacing:0">0,00</div>
<div class="c num b" style="left:436px;width:86px;top:444px;letter-spacing:0">0,00</div>
<div class="c num b" style="left:532px;width:86px;top:444px;letter-spacing:0">0,00</div>
<div class="c num b" style="left:628px;width:86px;top:444px;letter-spacing:0">0,00</div>
<div class="c num b" style="left:724px;width:86px;top:444px;letter-spacing:0">0,00</div>
<div class="c num b" style="left:1012px;width:86px;top:444px;letter-spacing:0">125,00</div>
<div class="c num b" style="left:1108px;width:86px;top:444px;letter-spacing:0">0,00</div>
<div class="c num b" style="left:1204px;width:86px;top:444px;letter-spacing:0">0,00</div>
<div class="c num b" style="left:1300px;width:86px;top:444px;letter-spacing:0">0,00</div>
<div class="c num b" style="left:1396px;width:86px;top:444px;letter-spacing:0">125,00</div>
<div class="a" style="left:33px;top:476px;width:1650px;height:35px;background:#ede9fe"></div>
<div class="hl" style="left:32px;top:511px;width:1652px"></div>
<div class="vl" style="left:113px;top:476px;height:34px"></div>
<div class="vl" style="left:188px;top:476px;height:34px"></div>
<div class="vl" style="left:339px;top:476px;height:34px"></div>
<div class="vl" style="left:435px;top:476px;height:34px"></div>
<div class="vl" style="left:531px;top:476px;height:34px"></div>
<div class="vl" style="left:627px;top:476px;height:34px"></div>
<div class="vl" style="left:723px;top:476px;height:34px"></div>
<div class="vl" style="left:819px;top:476px;height:34px"></div>
<div class="vl" style="left:915px;top:476px;height:34px"></div>
<div class="vl" style="left:1011px;top:476px;height:34px"></div>
<div class="vl" style="left:1107px;top:476px;height:34px"></div>
<div class="vl" style="left:1203px;top:476px;height:34px"></div>
<div class="vl" style="left:1299px;top:476px;height:34px"></div>
<div class="vl" style="left:1395px;top:476px;height:34px"></div>
<div class="vl" style="left:1491px;top:476px;height:34px"></div>
<div class="vl" style="left:1587px;top:476px;height:34px"></div>
<div class="vl" style="left:1683px;top:476px;height:34px"></div>
<div class="c b" style="left:33px;width:80px;top:480px;text-align:center;padding-right:4.5px">И4</div>
<div class="c b" style="left:119px;width:69px;top:480px">ТСН-2001…<br>п.3.3.4</div>
<div class="c b" style="left:199px;width:140px;top:480px">в т.ч. производственная<br>часть</div>
<div class="c num b" style="left:340px;width:86px;top:480px;letter-spacing:0">46,62</div>
<div class="c num b" style="left:436px;width:86px;top:480px;letter-spacing:0">0,00</div>
<div class="c num b" style="left:532px;width:86px;top:480px;letter-spacing:0">0,00</div>
<div class="c num b" style="left:628px;width:86px;top:480px;letter-spacing:0">0,00</div>
<div class="c num b" style="left:724px;width:86px;top:480px;letter-spacing:0">46,62</div>
<div class="c num b" style="left:1012px;width:86px;top:480px;letter-spacing:0">252,14</div>
<div class="c num b" style="left:1108px;width:86px;top:480px;letter-spacing:0">0,00</div>
<div class="c num b" style="left:1204px;width:86px;top:480px;letter-spacing:0">0,00</div>
<div class="c num b" style="left:1300px;width:86px;top:480px;letter-spacing:0">87,50</div>
<div class="c num b" style="left:1396px;width:86px;top:480px;letter-spacing:0">339,64</div>
<div class="hl" style="left:32px;top:1017px;width:1724px"></div>
<div class="a" style="left:32px;top:1018px;width:188px;height:30px;background:#ffecb3"></div>
<div class="a" style="left:32px;top:1018px;width:188px;height:4px;background:#ffa000"></div>
<div class="t" style="left:80px;top:1024px;font-size:13.5px;line-height:16px;font-weight:bold;letter-spacing:-0.1px">Объектная смета</div>
<svg class="a" style="left:201px;top:1026px" width="14" height="14"><path d="M2.3 2.5l9.4 9.4M11.7 2.5l-9.4 9.4" stroke="#212121" stroke-width="1.5" fill="none"/></svg>
<svg class="a" style="left:56px;top:1024px" width="19" height="19" viewBox="0 0 19 19"><g fill="none" stroke="#e0a850" stroke-width="0.9"><path d="M0.2 4.5h16.8M9.4 0.2v4.3M9.4 0.3L1.2 4.3M9.4 0.3L16.6 4.3M8.3 4.5v12.8M4.2 17.4h6"/></g><path d="M2.6 4.9v4" stroke="#a493d8" stroke-width="1.3"/><circle cx="2.6" cy="10.1" r="1.5" fill="#4521a8"/><path d="M9 6h8v11h1v0.9h-10v-0.9h1z" fill="#4521a8"/><g fill="#d9cfa8"><rect x="10.2" y="7.2" width="1" height="1"/><rect x="12.5" y="7.2" width="1" height="1"/><rect x="14.8" y="7.2" width="1" height="1"/><rect x="10.2" y="9.2" width="1" height="1"/><rect x="12.5" y="9.2" width="1" height="1"/><rect x="14.8" y="9.2" width="1" height="1"/><rect x="10.2" y="11.2" width="1" height="1"/><rect x="12.5" y="11.2" width="1" height="1"/><rect x="14.8" y="11.2" width="1" height="1"/><rect x="10.2" y="13.2" width="1" height="1"/><rect x="12.5" y="13.2" width="1" height="1"/><rect x="14.8" y="13.2" width="1" height="1"/><rect x="12.2" y="15.6" width="1.7" height="1.6" fill="#ffecb3"/></g></svg>

<div class="vl" style="left:1324px;top:1018px;height:27px;background:#dcdcdc"></div>
<div class="t" style="left:1337px;top:1023px;font-size:13.5px;line-height:16px;font-weight:bold;letter-spacing:-0.2px">Всего</div>
<div class="t" style="left:1393px;top:1024px;font-size:14px;line-height:16px;letter-spacing:-0.2px">Б: 46,62 тыс. р.</div>
<div class="t" style="left:1508px;top:1024px;font-size:14px;line-height:16px;letter-spacing:-0.2px">Т: 464,64 тыс. р.</div>
</body></html>
